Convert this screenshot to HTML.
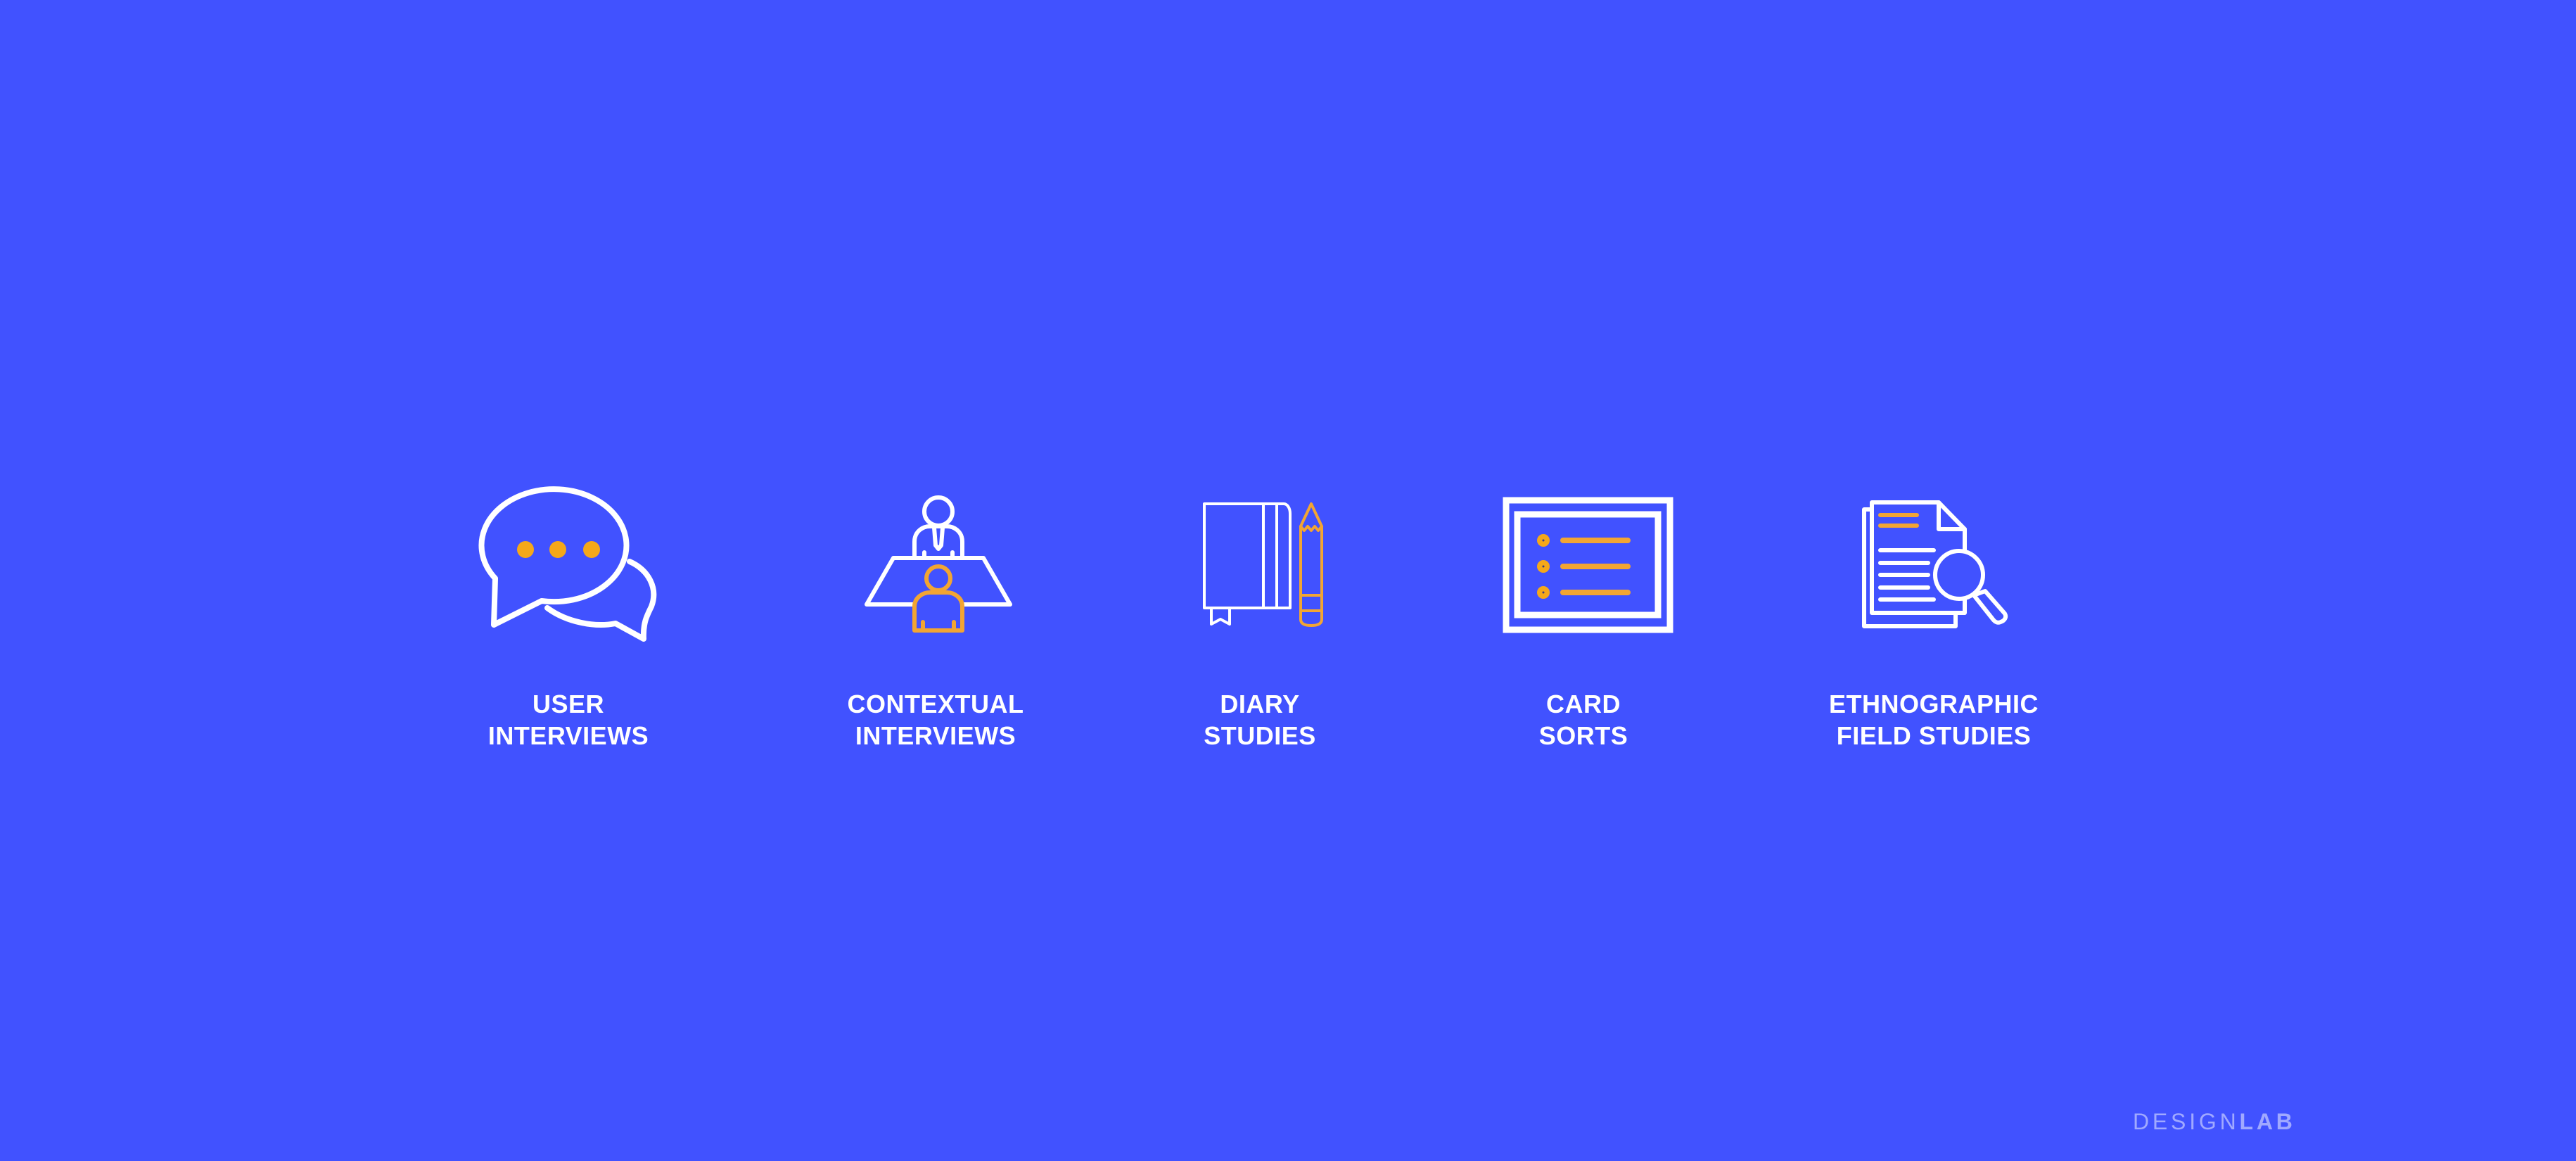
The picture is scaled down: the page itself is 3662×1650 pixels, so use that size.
<!DOCTYPE html>
<html><head><meta charset="utf-8"><style>
html,body{margin:0;padding:0;background:#4152ff;}
body{width:3662px;height:1650px;position:relative;overflow:hidden;font-family:"Liberation Sans",sans-serif;}
svg{position:absolute;left:0;top:0}
.l{position:absolute;color:#fff;font-weight:bold;font-size:36px;line-height:45px;text-align:center;width:500px;letter-spacing:0.5px;top:978px}
.logo{position:absolute;left:3032px;top:1576px;font-size:32px;letter-spacing:4.8px;color:#a0a9ff;line-height:36px}
.logo b{font-weight:bold}
</style></head><body>
<svg width="3662" height="1650" viewBox="0 0 3662 1650" fill="none" stroke-linejoin="round" stroke-linecap="round">
 <g stroke="#fff" stroke-width="8">
  <path d="M895 798 C922 810 936 836 926 862 C919 876 914 886 915 908 L875 886 C845 892 805 884 778 864" />
  <path d="M704 822 L702 888 L770 854 A103 80 0 1 0 704 822 Z" fill="#4152ff"/>
 </g>
 <g fill="#f5a81a"><circle cx="747" cy="781" r="12"/><circle cx="793" cy="781" r="12"/><circle cx="841" cy="781" r="12"/></g>
 <g stroke="#fff" stroke-width="6">
  <circle cx="1334" cy="727" r="20"/>
  <path d="M1300 792 V770 C1300 755 1312 748 1322 748 H1346 C1356 748 1368 755 1368 770 V792"/>
  <path d="M1328 750 L1330 775 L1334 780 L1338 775 L1340 750"/>
  <path d="M1314 785 V793 M1354 785 V793"/>
  <path d="M1270 793 H1398 L1436 859 H1232 Z"/>
 </g>
 <g stroke="#f2a533" stroke-width="6">
  <circle cx="1334" cy="822" r="17"/>
  <path d="M1300 896 V862 C1300 849 1312 842 1322 842 H1346 C1356 842 1368 849 1368 862 V896 Z" fill="#4152ff"/>
  <path d="M1312 884 V896 M1356 884 V896"/>
 </g>
 <g stroke="#fff" stroke-width="4">
  <path d="M1712 716 H1825 C1830 716 1834 722 1834 730 V864 H1712 Z"/>
  <path d="M1796 716 V864 M1815 716 V864"/>
  <path d="M1722 864 V887 L1735 880 L1748 887 V864"/>
 </g>
 <g stroke="#f2a533" stroke-width="4">
  <path d="M1849 748 L1864 716 L1879 748 V880 C1879 886 1874 889 1864 889 C1854 889 1849 886 1849 880 Z"/>
  <path d="M1849 748 L1854 754 L1859 748 L1864 754 L1869 748 L1874 754 L1879 748"/>
  <path d="M1849 846 H1879 M1849 868 H1879"/>
 </g>
 <g stroke="#fff" stroke-width="9" stroke-linejoin="miter">
  <rect x="2141" y="711" width="233" height="184"/>
  <rect x="2157" y="731" width="200" height="143"/>
 </g>
 <g fill="#f5a81a"><circle cx="2194" cy="768" r="9"/><circle cx="2194" cy="805" r="9"/><circle cx="2194" cy="842" r="9"/></g>
 <g fill="#3a3a80"><circle cx="2194" cy="768" r="1.5"/><circle cx="2194" cy="805" r="1.5"/><circle cx="2194" cy="842" r="1.5"/></g>
 <g stroke="#f2a533" stroke-width="8"><path d="M2222 768 H2314 M2222 805 H2314 M2222 842 H2314"/></g>
 <g stroke="#fff" stroke-width="6">
  <path d="M2660 724 H2650 V890 H2780 V873"/>
  <path d="M2661 714 H2756 L2793 752 V871 H2661 Z" fill="#4152ff"/>
  <path d="M2756 714 V752 H2793"/>
  <path d="M2673 782 H2749 M2673 800 H2741 M2673 817 H2741 M2673 835 H2741 M2673 852 H2749"/>
  <circle cx="2785" cy="817" r="34" fill="#4152ff"/>
  <path d="M2806 846 L2822 840 L2850 872 C2853 877 2850 882 2844 884 C2840 886 2836 884 2833 880 Z" fill="#4152ff"/>
 </g>
 <g stroke="#f2a533" stroke-width="6"><path d="M2673 732 H2725 M2673 747 H2725"/></g>
</svg>
<div class="l" style="left:558px">USER<br>INTERVIEWS</div>
<div class="l" style="left:1080px">CONTEXTUAL<br>INTERVIEWS</div>
<div class="l" style="left:1541px">DIARY<br>STUDIES</div>
<div class="l" style="left:2001px">CARD<br>SORTS</div>
<div class="l" style="left:2499px">ETHNOGRAPHIC<br>FIELD STUDIES</div>
<div class="logo">DESIGN<b>LAB</b></div>
</body></html>
